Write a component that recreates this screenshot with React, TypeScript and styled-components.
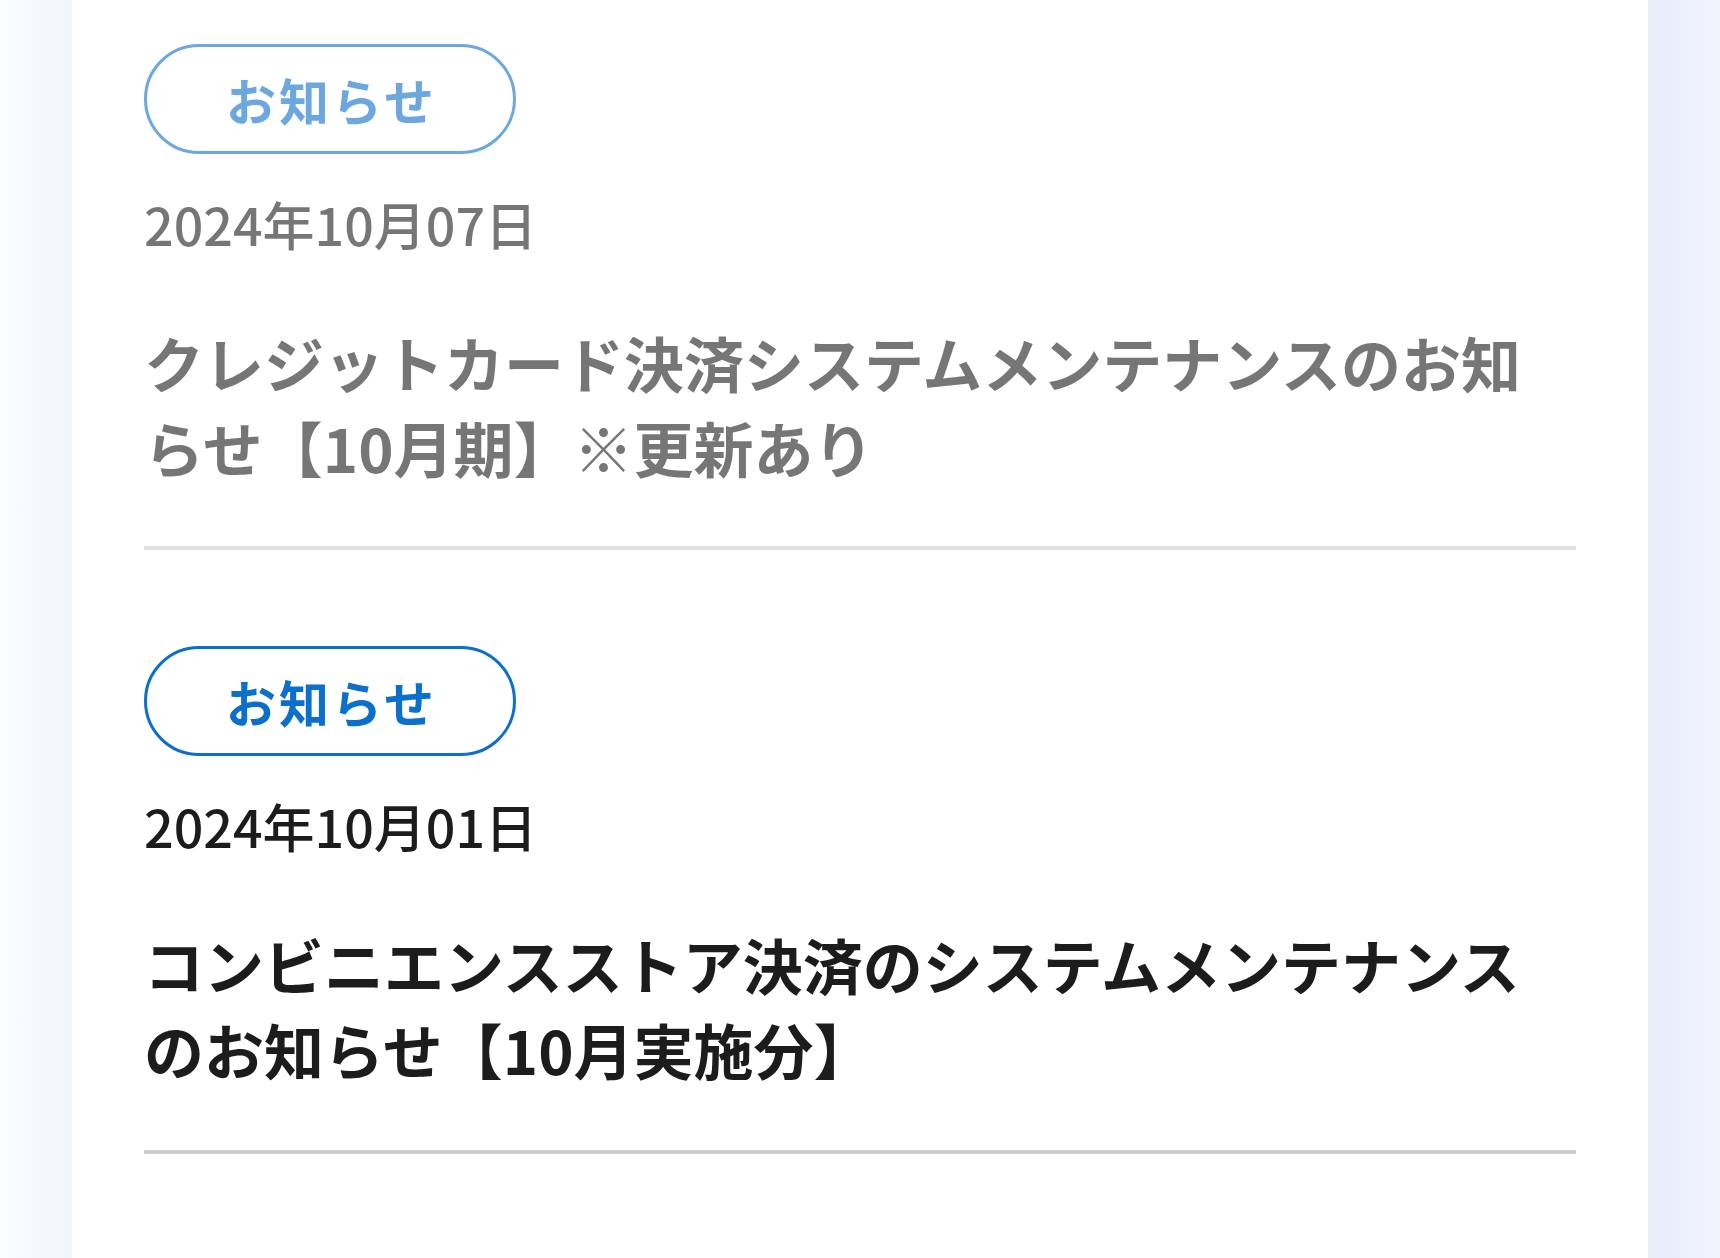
import React from "react";
import styled, { createGlobalStyle } from "styled-components";

const GlobalStyle = createGlobalStyle`
  html, body {
    margin: 0;
    padding: 0;
  }
  body {
    min-height: 1258px;
    background: linear-gradient(
      90deg,
      #fbfcfe 0%,
      #f2f5fc 4.2%,
      #eef2fb 50%,
      #e6edf9 95.8%,
      #f0f4fd 100%
    );
    font-family: "Noto Sans CJK JP", "Noto Sans", sans-serif;
    color: #1c1c1c;
  }
`;

const Page = styled.div`
  display: flex;
  justify-content: center;
  min-height: 1258px;
`;

const Card = styled.main`
  width: 1576px;
  box-sizing: border-box;
  background: #ffffff;
  padding: 44px 72px 0 72px;
`;

const NewsList = styled.ul`
  list-style: none;
  margin: 0;
  padding: 0;
`;

const NewsItem = styled.li<{ $read?: boolean }>`
  display: flex;
  flex-direction: column;
  align-items: flex-start;
  padding-bottom: 57px;
  border-bottom: 4px solid #cccccc;
  opacity: ${({ $read }) => ($read ? 0.6 : 1)};

  & + & {
    margin-top: 96px;
    padding-bottom: 59px;
  }
`;

const Badge = styled.span`
  display: flex;
  align-items: center;
  justify-content: center;
  box-sizing: border-box;
  width: 372px;
  height: 110px;
  border: 3.5px solid #0b6fcb;
  border-radius: 55px;
  color: #0b6fcb;
  font-size: 50px;
  font-weight: 700;
  letter-spacing: 3px;
  padding-left: 3px;
`;

const DateText = styled.time`
  display: block;
  margin-top: 29px;
  font-size: 52px;
  line-height: 81px;
  font-weight: 500;
  color: #1c1c1c;
`;

const Title = styled.h2`
  margin: 55px 0 0 0;
  font-size: 60px;
  line-height: 85px;
  font-weight: 700;
  color: #1c1c1c;
`;

type News = {
  category: string;
  date: string;
  title: string;
  read?: boolean;
};

const news: News[] = [
  {
    category: "お知らせ",
    date: "2024年10月07日",
    title: "クレジットカード決済システムメンテナンスのお知らせ【10月期】※更新あり",
    read: true,
  },
  {
    category: "お知らせ",
    date: "2024年10月01日",
    title: "コンビニエンスストア決済のシステムメンテナンスのお知らせ【10月実施分】",
  },
];

export default function App() {
  return (
    <>
      <GlobalStyle />
      <Page>
        <Card>
          <NewsList>
            {news.map((n) => (
              <NewsItem key={n.date} $read={n.read}>
                <Badge>{n.category}</Badge>
                <DateText>{n.date}</DateText>
                <Title>{n.title}</Title>
              </NewsItem>
            ))}
          </NewsList>
        </Card>
      </Page>
    </>
  );
}
